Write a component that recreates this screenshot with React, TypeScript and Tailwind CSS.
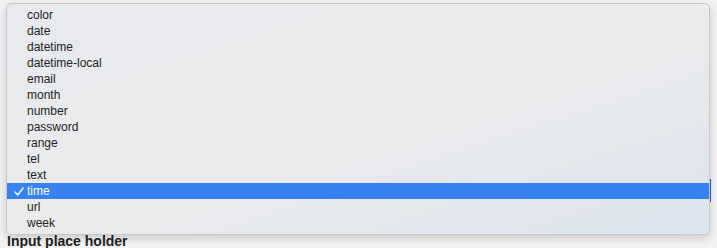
import React from "react";

const items = [
  "color",
  "date",
  "datetime",
  "datetime-local",
  "email",
  "month",
  "number",
  "password",
  "range",
  "tel",
  "text",
  "time",
  "url",
  "week",
];

export default function App() {
  return (
    <div
      className="relative w-[717px] h-[248px] overflow-hidden bg-[#f3f3f3]"
      style={{ fontFamily: '"Liberation Sans", Arial, sans-serif' }}
    >
      {/* underlying page content */}
      <div className="flex flex-col pl-[7px] pt-[179px]">
        <div className="h-[23px] w-[704px] border-r-[2px] border-[#1b5fd6] bg-white" />
        <div className="mt-[31px] text-[14px] font-bold leading-[16px] text-[#222]">
          Input place holder
        </div>
      </div>

      {/* native select popup menu */}
      <div className="absolute left-[6px] top-[3px] w-[704px] h-[232px] rounded-[5px] border border-[#c9c9c9] bg-linear-to-br from-[#e7e9ed] via-[#ebebeb] to-[#dde4ee] pt-[3px] shadow-[0_3px_10px_rgba(0,0,0,0.18)]">
        {items.map((it) => {
          const sel = it === "time";
          return (
            <div
              key={it}
              className={
                sel
                  ? "flex h-[16px] items-center bg-[#3582f0] text-white"
                  : "flex h-[16px] items-center text-[#222]"
              }
            >
              <div className="flex w-[20px] justify-end pr-[3px]">
                {sel && (
                  <svg width="10" height="9" viewBox="0 0 10 9">
                    <path
                      d="M1 5 L3.8 8 L9 1"
                      fill="none"
                      stroke="white"
                      strokeWidth="1.4"
                      strokeLinecap="round"
                      strokeLinejoin="round"
                    />
                  </svg>
                )}
              </div>
              <span className="text-[12px] leading-[16px]">{it}</span>
            </div>
          );
        })}
      </div>
    </div>
  );
}
